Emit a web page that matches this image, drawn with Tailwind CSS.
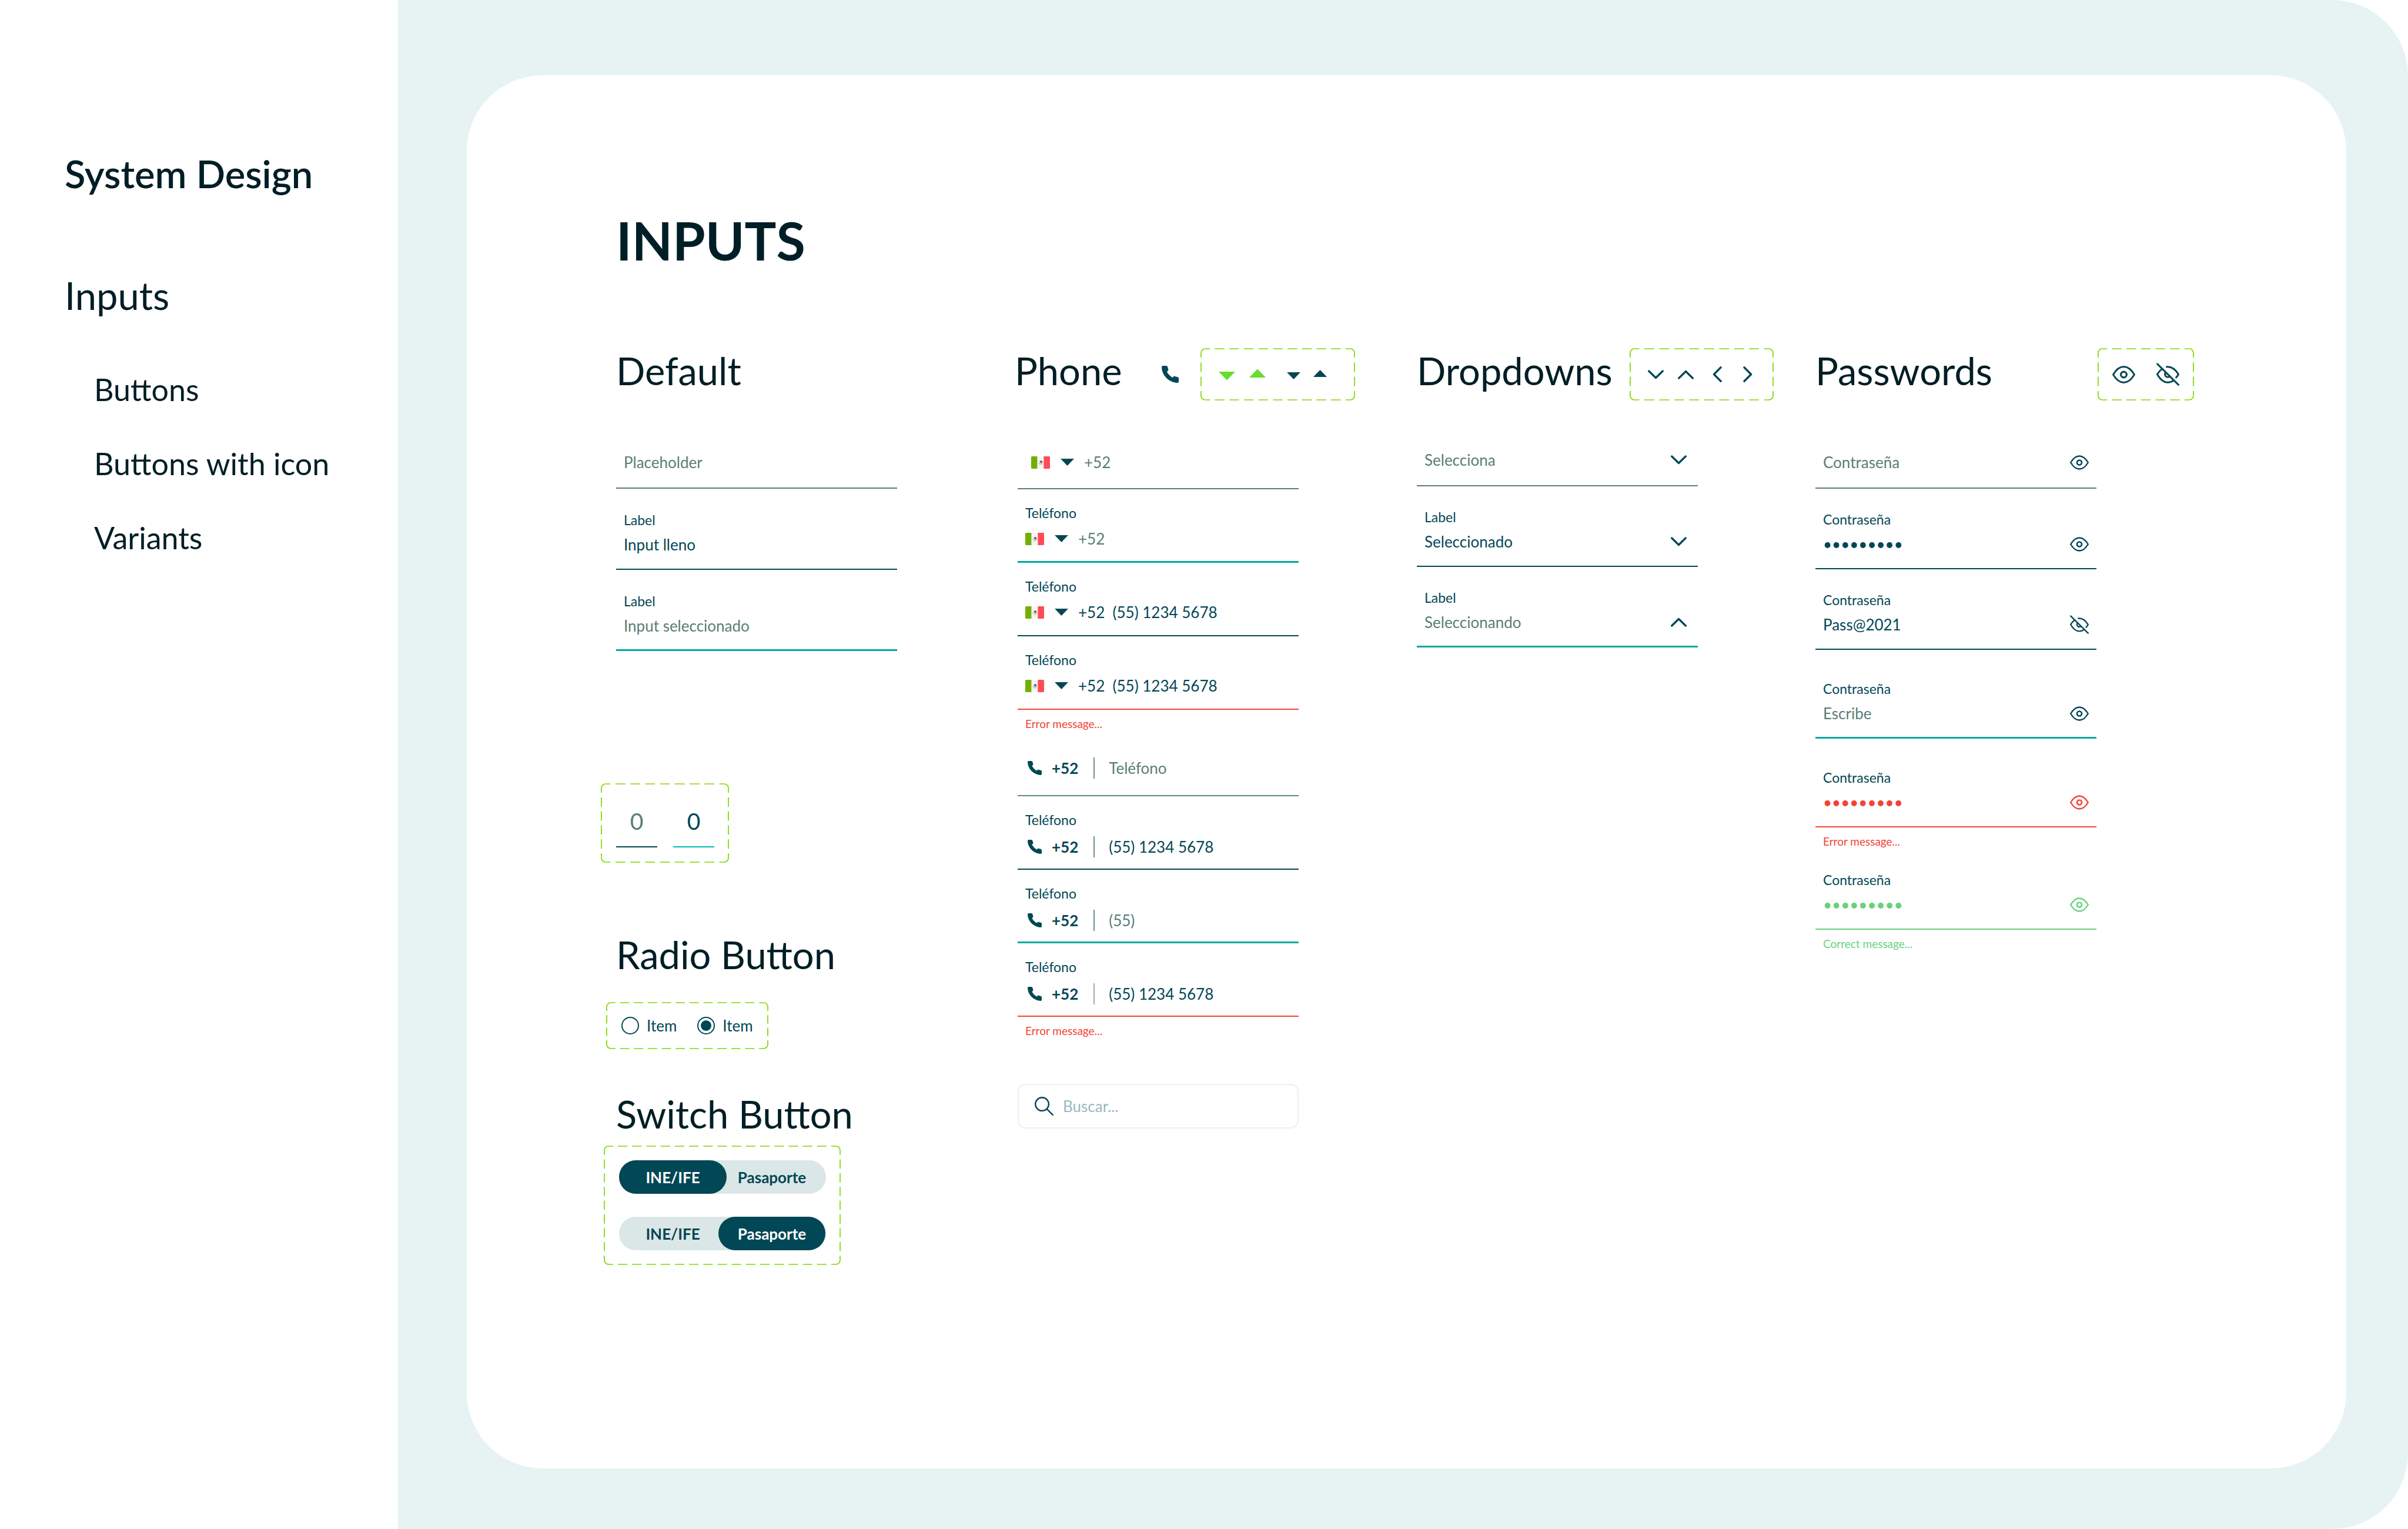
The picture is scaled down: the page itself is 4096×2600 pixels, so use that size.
<!DOCTYPE html>
<html lang="es">
<head>
<meta charset="utf-8">
<meta name="viewport" content="width=device-width, initial-scale=1">
<title>System Design – Inputs</title>
<script src="https://cdn.jsdelivr.net/npm/@tailwindcss/browser@4"></script>
</head>
<body class="min-h-screen flex bg-white font-[Lato,sans-serif] text-[#001e26]">

<!-- Shared icons -->
<svg class="hidden" aria-hidden="true">
  <symbol id="eye" viewBox="0 0 48 37">
    <path d="M1.8 18.5C7.5 9 15 1.9 24 1.9S40.500 9 46.200 18.500C40.500 28 33 35.100 24 35.100S7.500 28 1.800 18.500Z" fill="none" stroke="currentColor" stroke-width="3.6" stroke-linejoin="round"/>
    <circle cx="24" cy="18.5" r="6" fill="none" stroke="currentColor" stroke-width="4"/>
  </symbol>
  <symbol id="eye-off" viewBox="0 0 48 48">
    <g fill="none" stroke="currentColor" stroke-width="3.6" stroke-linecap="round" stroke-linejoin="round">
      <path d="M21.500 8.300C32 7.500 40 13.500 46.200 24C45 26.500 43.300 28.800 41.300 30.800"/>
      <path d="M12 12.500C8 15.500 4.500 19.500 1.800 24C7.500 34 15 41 24 41C28.500 41 32.500 39.500 36 36.800"/>
      <path d="M18.800 20.500C16.500 25.500 19.500 30 24 30C25.500 30 27 29.500 28 28.500"/>
      <path d="M2 2.300L46.200 46"/>
    </g>
  </symbol>
  <symbol id="phone" viewBox="0 0 67 67">
    <path fill="currentColor" d="M5 0H18Q22.500 0 23.500 5L26 14Q27 18 24 20.500L20.500 23.500Q29 38 43 46.500L45.500 43Q47.500 40.500 51 41.500L62 44Q67 45 67 49.500V62Q67 67 62 67C28 65 1 38 0 5Q0 0 5 0Z"/>
  </symbol>
  <symbol id="search" viewBox="0 0 40 40">
    <g fill="none" stroke="currentColor" stroke-width="3" stroke-linecap="round">
      <circle cx="15.700" cy="15.700" r="14.200"/>
      <path d="M26 26.200L38.500 38.500"/>
    </g>
  </symbol>
  <symbol id="chevron" viewBox="0 0 34 20">
    <path d="M2.200 2.400L17 17L31.800 2.400" fill="none" stroke="currentColor" stroke-width="4.200" stroke-linecap="round" stroke-linejoin="round"/>
  </symbol>
  <symbol id="chevron-side" viewBox="0 0 20 34">
    <path d="M17.600 2.200L3 17L17.600 31.800" fill="none" stroke="currentColor" stroke-width="4.200" stroke-linecap="round" stroke-linejoin="round"/>
  </symbol>
  <symbol id="caret" viewBox="0 0 23 12">
    <path d="M0 0H23L11.500 12Z" fill="currentColor"/>
  </symbol>
  <symbol id="flag-mx" viewBox="0 0 40 26">
    <path d="M2 0H13.300V26H2Q0 26 0 24V2Q0 0 2 0Z" fill="#73af00"/>
    <path d="M13.300 0H26.700V26H13.300Z" fill="#f5f5f5"/>
    <path d="M26.700 0H38Q40 0 40 2V24Q40 26 38 26H26.700Z" fill="#ff4b55"/>
    <path d="M15.800 12.500C16 17 19 18 20.500 18S24.500 16.500 24.700 12.500" fill="none" stroke="#b9cf8a" stroke-width="1"/>
    <path d="M18 11C19.500 8.200 23.500 8.500 24 11.500C24 14 21.500 14.500 20 13.500Z" fill="#8c5a5f"/>
    <path d="M20.500 9.500L23 12" stroke="#5d3540" stroke-width="1.200"/>
    <path d="M17.500 14.500H20M21 15.500H23.500" stroke="#3fa9c4" stroke-width="1.400"/>
    <path d="M19.500 16.500H21.500" stroke="#e2c34c" stroke-width="1"/>
  </symbol>
</svg>

<aside class="w-[677px] shrink-0 pl-[110px] pt-[255px]">
  <p class="text-[65px] leading-[80px] font-semibold">System Design</p>
  <nav class="mt-[127px]">
    <a href="#inputs" class="block text-[65px] leading-[80px]">Inputs</a>
    <ul class="mt-[88px] pl-[50px] flex flex-col gap-[62px] text-[52px] leading-[64px]">
      <li><a href="#buttons">Buttons</a></li>
      <li><a href="#buttons-icon">Buttons with icon</a></li>
      <li><a href="#variants">Variants</a></li>
    </ul>
  </nav>
</aside>

<main id="inputs" class="flex-1 flex rounded-r-[129px] bg-[#e7f3f3] pl-[117px] pr-[105px] pt-[128px] pb-[103px]">
  <div class="flex-1 rounded-[129px] bg-white pt-[226px] pl-[254px] pr-[259px]">
    <h1 class="text-[90px] leading-[108px] font-bold">INPUTS</h1>

    <div class="mt-[130px] grid grid-cols-[678fr_684fr_678fr_644fr] text-[26px] leading-8 text-[#024755]">

      <!-- Default -->
      <section>
        <div class="min-h-[89px]">
          <h2 class="text-[65px] leading-[76px] text-[#001e26]">Default</h2>
        </div>
        <div class="mt-[89px] w-[478px] flex flex-col gap-[39px]">
          <div class="px-[13px] pb-[27px] border-b-2 border-[#5a7d76]">
            <input aria-label="Placeholder" placeholder="Placeholder" class="block w-full h-8 outline-none placeholder:text-[#5a7d76]">
          </div>
          <div class="px-[13px] pb-[25px] border-b-2 border-[#024755]">
            <label for="d2" class="block text-[23px] leading-7">Label</label>
            <input id="d2" value="Input lleno" class="block mt-3 w-full h-8 outline-none">
          </div>
          <div class="px-[13px] pb-6 border-b-3 border-[#00a99d]">
            <label for="d3" class="block text-[23px] leading-7">Label</label>
            <input id="d3" placeholder="Input seleccionado" class="block mt-3 w-full h-8 outline-none placeholder:text-[#5a7d76]">
          </div>
        </div>

        <div class="relative -ml-[26px] mt-[225px] w-[218px] h-[135px] px-[26px] pt-10 flex items-start gap-[27px]">
          <svg class="absolute inset-0 size-full" viewBox="0 0 218 135" fill="none" stroke="#80d700" stroke-width="1.700" aria-hidden="true">
            <path d="M1 8a7 7 0 0 1 7-7M210 1a7 7 0 0 1 7 7M217 127a7 7 0 0 1-7 7M8 134a7 7 0 0 1-7-7"/>
            <g stroke-dasharray="2 1" stroke-dashoffset="1">
              <path pathLength="24" d="M8 1H210"/><path pathLength="24" d="M8 134H210"/>
              <path pathLength="15" d="M1 8V127"/><path pathLength="15" d="M217 8V127"/>
            </g>
          </svg>
          <input aria-label="Dígito 1" placeholder="0" class="relative w-[70px] h-[69px] pb-[19px] border-b-2 border-[#024755] text-center text-[39px] leading-[48px] outline-none placeholder:text-[#5a7d76]">
          <input aria-label="Dígito 2" value="0" class="relative w-[70px] h-[69px] pb-[19px] border-b-2 border-[#00bdb2] text-center text-[39px] leading-[48px] outline-none">
        </div>

        <h2 class="mt-[118px] text-[65px] leading-[76px] text-[#001e26]">Radio Button</h2>
        <div class="relative -ml-[17px] mt-[43px] w-[276px] h-[80px] pl-[26px] flex items-center gap-[35px]">
          <svg class="absolute inset-0 size-full" viewBox="0 0 276 80" fill="none" stroke="#80d700" stroke-width="1.700" aria-hidden="true">
            <path d="M1 8a7 7 0 0 1 7-7M268 1a7 7 0 0 1 7 7M275 72a7 7 0 0 1-7 7M8 79a7 7 0 0 1-7-7"/>
            <g stroke-dasharray="2 1" stroke-dashoffset="1">
              <path pathLength="33" d="M8 1H268"/><path pathLength="33" d="M8 79H268"/>
              <path pathLength="9" d="M1 8V72"/><path pathLength="9" d="M275 8V72"/>
            </g>
          </svg>
          <label class="relative flex items-center gap-[13px]"><input type="radio" name="item" class="appearance-none grid place-content-center size-[30px] rounded-full border-2 border-[#024755] before:size-[18px] before:rounded-full checked:before:bg-[#024755]">Item</label>
          <label class="relative flex items-center gap-[13px]"><input type="radio" name="item" checked class="appearance-none grid place-content-center size-[30px] rounded-full border-2 border-[#024755] before:size-[18px] before:rounded-full checked:before:bg-[#024755]">Item</label>
        </div>

        <h2 class="mt-[72px] text-[65px] leading-[76px] text-[#001e26]">Switch Button</h2>
        <div class="relative -ml-[21px] mt-4 w-[403px] h-[203px] px-[26px] py-[25px] flex flex-col gap-[39px] font-bold">
          <svg class="absolute inset-0 size-full" viewBox="0 0 403 203" fill="none" stroke="#80d700" stroke-width="1.700" aria-hidden="true">
            <path d="M1 8a7 7 0 0 1 7-7M395 1a7 7 0 0 1 7 7M402 195a7 7 0 0 1-7 7M8 202a7 7 0 0 1-7-7"/>
            <g stroke-dasharray="2 1" stroke-dashoffset="1">
              <path pathLength="48" d="M8 1H395"/><path pathLength="48" d="M8 202H395"/>
              <path pathLength="24" d="M1 8V195"/><path pathLength="24" d="M402 8V195"/>
            </g>
          </svg>
          <div class="relative flex w-[352px] h-[57px] rounded-full bg-[#dbe7e6]">
            <button type="button" aria-pressed="true" class="w-[183px] rounded-full bg-[#024755] text-white">INE/IFE</button>
            <button type="button" aria-pressed="false" class="-ml-[14px] w-[182px] rounded-full">Pasaporte</button>
          </div>
          <div class="relative flex w-[352px] h-[57px] rounded-full bg-[#dbe7e6]">
            <button type="button" aria-pressed="false" class="w-[183px] rounded-full">INE/IFE</button>
            <button type="button" aria-pressed="true" class="-ml-[14px] w-[182px] rounded-full bg-[#024755] text-white">Pasaporte</button>
          </div>
        </div>
      </section>

      <!-- Phone -->
      <section>
        <div class="min-h-[89px] w-[579px] flex items-start justify-between">
          <h2 class="text-[65px] leading-[76px] text-[#001e26]">Phone</h2>
          <div class="flex items-center gap-[37px]">
            <svg class="size-[29px]" aria-hidden="true"><use href="#phone"/></svg>
            <div class="relative w-[263px] h-[89px] pl-[31px] flex items-center">
              <svg class="absolute inset-0 size-full" viewBox="0 0 263 89" fill="none" stroke="#80d700" stroke-width="1.700" aria-hidden="true">
                <path d="M1 8a7 7 0 0 1 7-7M255 1a7 7 0 0 1 7 7M262 81a7 7 0 0 1-7 7M8 88a7 7 0 0 1-7-7"/>
                <g stroke-dasharray="2 1" stroke-dashoffset="1">
                  <path pathLength="30" d="M8 1H255"/><path pathLength="30" d="M8 88H255"/>
                  <path pathLength="9" d="M1 8V81"/><path pathLength="9" d="M262 8V81"/>
                </g>
              </svg>
              <div class="flex gap-6 text-[#66dd2e]">
                <svg class="w-7 h-5" viewBox="0 0 28 20" aria-hidden="true"><path d="M0 5H28L14 19.500Z" fill="currentColor"/></svg>
                <svg class="w-7 h-5" viewBox="0 0 28 20" aria-hidden="true"><path d="M0 15H28L14 .5Z" fill="currentColor"/></svg>
              </div>
              <div class="ml-9 flex gap-[22px]">
                <svg class="w-[23px] h-5" viewBox="0 0 23 20" aria-hidden="true"><path d="M0 6H23L11.500 18Z" fill="currentColor"/></svg>
                <svg class="w-[23px] h-5" viewBox="0 0 23 20" aria-hidden="true"><path d="M0 14H23L11.500 2Z" fill="currentColor"/></svg>
              </div>
            </div>
          </div>
        </div>

        <div class="mt-[89px] ml-[5px] w-[478px]">
          <div class="flex flex-col gap-[26px]">
            <div class="pl-[23px] pr-3 pb-7 border-b-2 border-[#5a7d76]">
              <div class="flex items-center h-8">
                <button type="button" aria-label="País" class="flex items-center gap-[18px]">
                  <svg class="w-8 h-[21px]" aria-hidden="true"><use href="#flag-mx"/></svg>
                  <svg class="w-[23px] h-3" aria-hidden="true"><use href="#caret"/></svg>
                </button>
                <input type="tel" aria-label="Teléfono" placeholder="+52" class="ml-[17px] flex-1 min-w-0 h-8 outline-none placeholder:text-[#5a7d76]">
              </div>
            </div>
            <div class="px-[13px] pb-[22px] border-b-3 border-[#00a99d]">
              <label for="p2" class="block text-[23px] leading-7">Teléfono</label>
              <div class="mt-[14px] flex items-center h-8">
                <button type="button" aria-label="País" class="flex items-center gap-[18px]">
                  <svg class="w-8 h-[21px]" aria-hidden="true"><use href="#flag-mx"/></svg>
                  <svg class="w-[23px] h-3" aria-hidden="true"><use href="#caret"/></svg>
                </button>
                <input id="p2" type="tel" placeholder="+52" class="ml-[17px] flex-1 min-w-0 h-8 outline-none placeholder:text-[#5a7d76]">
              </div>
            </div>
            <div class="px-[13px] pb-[23px] border-b-2 border-[#024755]">
              <label for="p3" class="block text-[23px] leading-7">Teléfono</label>
              <div class="mt-[14px] flex items-center h-8">
                <button type="button" aria-label="País" class="flex items-center gap-[18px]">
                  <svg class="w-8 h-[21px]" aria-hidden="true"><use href="#flag-mx"/></svg>
                  <svg class="w-[23px] h-3" aria-hidden="true"><use href="#caret"/></svg>
                </button>
                <input id="p3" type="tel" value="+52  (55) 1234 5678" class="ml-[17px] flex-1 min-w-0 h-8 outline-none">
              </div>
            </div>
            <div class="px-[13px] pb-[23px] border-b-2 border-[#f44336]">
              <label for="p4" class="block text-[23px] leading-7">Teléfono</label>
              <div class="mt-[14px] flex items-center h-8">
                <button type="button" aria-label="País" class="flex items-center gap-[18px]">
                  <svg class="w-8 h-[21px]" aria-hidden="true"><use href="#flag-mx"/></svg>
                  <svg class="w-[23px] h-3" aria-hidden="true"><use href="#caret"/></svg>
                </button>
                <input id="p4" type="tel" value="+52  (55) 1234 5678" class="ml-[17px] flex-1 min-w-0 h-8 outline-none">
              </div>
            </div>
          </div>
          <p class="mt-3 px-[13px] text-[19px] leading-6 text-[#f44336]">Error message...</p>

          <div class="mt-[47px] flex flex-col gap-[26px]">
            <div class="px-[17px] pb-[30px] border-b-2 border-[#5a8d7c]">
              <div class="flex items-center h-8">
                <svg class="size-6" aria-hidden="true"><use href="#phone"/></svg>
                <span class="ml-[17px] font-bold">+52</span>
                <span class="ml-[26px] w-[2px] h-9 bg-[#6b8f99]"></span>
                <input type="tel" aria-label="Teléfono" placeholder="Teléfono" class="ml-6 flex-1 min-w-0 h-8 outline-none placeholder:text-[#5a7d76]">
              </div>
            </div>
            <div class="pb-[21px] border-b-2 border-[#024755]">
              <label for="p6" class="block px-[13px] text-[23px] leading-7">Teléfono</label>
              <div class="mt-4 px-[17px] flex items-center h-8">
                <svg class="size-6" aria-hidden="true"><use href="#phone"/></svg>
                <span class="ml-[17px] font-bold">+52</span>
                <span class="ml-[26px] w-[2px] h-9 bg-[#6b8f99]"></span>
                <input id="p6" type="tel" value="(55) 1234 5678" class="ml-6 flex-1 min-w-0 h-8 outline-none">
              </div>
            </div>
            <div class="pb-5 border-b-3 border-[#00a99d]">
              <label for="p7" class="block px-[13px] text-[23px] leading-7">Teléfono</label>
              <div class="mt-4 px-[17px] flex items-center h-8">
                <svg class="size-6" aria-hidden="true"><use href="#phone"/></svg>
                <span class="ml-[17px] font-bold">+52</span>
                <span class="ml-[26px] w-[2px] h-9 bg-[#6b8f99]"></span>
                <input id="p7" type="tel" placeholder="(55)" class="ml-6 flex-1 min-w-0 h-8 outline-none placeholder:text-[#5a7d76]">
              </div>
            </div>
            <div class="pb-[21px] border-b-2 border-[#f44336]">
              <label for="p8" class="block px-[13px] text-[23px] leading-7">Teléfono</label>
              <div class="mt-4 px-[17px] flex items-center h-8">
                <svg class="size-6" aria-hidden="true"><use href="#phone"/></svg>
                <span class="ml-[17px] font-bold">+52</span>
                <span class="ml-[26px] w-[2px] h-9 bg-[#9bb0ab]"></span>
                <input id="p8" type="tel" value="(55) 1234 5678" class="ml-6 flex-1 min-w-0 h-8 outline-none">
              </div>
            </div>
          </div>
          <p class="mt-3 px-[13px] text-[19px] leading-6 text-[#f44336]">Error message...</p>

          <div class="mt-[78px] h-[76px] pl-[27px] pr-3 flex items-center border-2 border-[#efefef] rounded-[14px]">
            <svg class="size-8" aria-hidden="true"><use href="#search"/></svg>
            <input type="search" aria-label="Buscar" placeholder="Buscar..." class="ml-4 flex-1 min-w-0 h-8 outline-none placeholder:text-[#9bb8bf]">
          </div>
        </div>
      </section>

      <!-- Dropdowns -->
      <section>
        <div class="min-h-[89px] w-[607px] flex items-start justify-between">
          <h2 class="text-[65px] leading-[76px] text-[#001e26]">Dropdowns</h2>
          <div class="relative w-[245px] h-[89px] pl-[31px] flex items-center">
            <svg class="absolute inset-0 size-full" viewBox="0 0 245 89" fill="none" stroke="#80d700" stroke-width="1.700" aria-hidden="true">
              <path d="M1 8a7 7 0 0 1 7-7M237 1a7 7 0 0 1 7 7M244 81a7 7 0 0 1-7 7M8 88a7 7 0 0 1-7-7"/>
              <g stroke-dasharray="2 1" stroke-dashoffset="1">
                <path pathLength="27" d="M8 1H237"/><path pathLength="27" d="M8 88H237"/>
                <path pathLength="9" d="M1 8V81"/><path pathLength="9" d="M244 8V81"/>
              </g>
            </svg>
            <svg class="w-[27px] h-4" aria-hidden="true"><use href="#chevron"/></svg>
            <svg class="ml-6 w-[27px] h-4 rotate-180" aria-hidden="true"><use href="#chevron"/></svg>
            <svg class="ml-8 w-4 h-[27px]" aria-hidden="true"><use href="#chevron-side"/></svg>
            <svg class="ml-9 w-4 h-[27px] rotate-180" aria-hidden="true"><use href="#chevron-side"/></svg>
          </div>
        </div>
        <div class="mt-[85px] w-[478px] flex flex-col gap-[38px]">
          <div class="pl-[13px] pr-[19px] pb-[27px] flex items-center border-b-2 border-[#5a7d76]">
            <select aria-label="Selecciona" class="appearance-none flex-1 min-w-0 h-8 outline-none text-[#5a7d76]"><option>Selecciona</option></select>
            <svg class="w-[27px] h-4 pointer-events-none" aria-hidden="true"><use href="#chevron"/></svg>
          </div>
          <div class="pl-[13px] pr-[19px] pb-[25px] border-b-2 border-[#024755]">
            <label for="s2" class="block text-[23px] leading-7">Label</label>
            <div class="mt-3 flex items-center">
              <select id="s2" class="appearance-none flex-1 min-w-0 h-8 outline-none"><option>Seleccionado</option></select>
              <svg class="w-[27px] h-4 pointer-events-none" aria-hidden="true"><use href="#chevron"/></svg>
            </div>
          </div>
          <div class="pl-[13px] pr-[19px] pb-6 border-b-3 border-[#00a99d]">
            <label for="s3" class="block text-[23px] leading-7">Label</label>
            <div class="mt-3 flex items-center">
              <select id="s3" class="appearance-none flex-1 min-w-0 h-8 outline-none text-[#5a7d76]"><option>Seleccionando</option></select>
              <svg class="w-[27px] h-4 rotate-180 pointer-events-none" aria-hidden="true"><use href="#chevron"/></svg>
            </div>
          </div>
        </div>
      </section>

      <!-- Passwords -->
      <section>
        <div class="min-h-[89px] flex items-start justify-between">
          <h2 class="text-[65px] leading-[76px] text-[#001e26]">Passwords</h2>
          <div class="relative w-[164px] h-[89px] px-[25px] flex items-center justify-between">
            <svg class="absolute inset-0 size-full" viewBox="0 0 164 89" fill="none" stroke="#80d700" stroke-width="1.700" aria-hidden="true">
              <path d="M1 8a7 7 0 0 1 7-7M156 1a7 7 0 0 1 7 7M163 81a7 7 0 0 1-7 7M8 88a7 7 0 0 1-7-7"/>
              <g stroke-dasharray="2 1" stroke-dashoffset="1">
                <path pathLength="18" d="M8 1H156"/><path pathLength="18" d="M8 88H156"/>
                <path pathLength="9" d="M1 8V81"/><path pathLength="9" d="M163 8V81"/>
              </g>
            </svg>
            <svg class="w-[39px] h-[30px]" aria-hidden="true"><use href="#eye"/></svg>
            <svg class="size-[39px]" aria-hidden="true"><use href="#eye-off"/></svg>
          </div>
        </div>
        <div class="mt-[89px] w-[478px] flex flex-col gap-[52px]">
          <div class="flex flex-col gap-[38px]">
            <div class="px-[13px] pb-[27px] flex items-center border-b-2 border-[#5a7d76]">
              <input type="password" aria-label="Contraseña" placeholder="Contraseña" class="flex-1 min-w-0 h-8 outline-none placeholder:text-[#5a7d76]">
              <button type="button" aria-label="Mostrar"><svg class="w-8 h-[25px]" aria-hidden="true"><use href="#eye"/></svg></button>
            </div>
            <div class="px-[13px] pb-[25px] border-b-2 border-[#024755]">
              <label for="w2" class="block text-[23px] leading-7">Contraseña</label>
              <div class="mt-3 h-8 flex items-center">
                <input id="w2" type="password" value="Pass@2021" class="flex-1 min-w-0 h-8 outline-none">
                <button type="button" aria-label="Mostrar"><svg class="w-8 h-[25px]" aria-hidden="true"><use href="#eye"/></svg></button>
              </div>
            </div>
            <div class="px-[13px] pb-[25px] border-b-2 border-[#024755]">
              <label for="w3" class="block text-[23px] leading-7">Contraseña</label>
              <div class="mt-3 h-8 flex items-center">
                <input id="w3" type="text" value="Pass@2021" class="flex-1 min-w-0 h-8 outline-none">
                <button type="button" aria-label="Ocultar"><svg class="size-8" aria-hidden="true"><use href="#eye-off"/></svg></button>
              </div>
            </div>
          </div>
          <div class="px-[13px] pb-6 border-b-3 border-[#00a99d]">
            <label for="w4" class="block text-[23px] leading-7">Contraseña</label>
            <div class="mt-3 h-8 flex items-center">
              <input id="w4" type="password" placeholder="Escribe" class="flex-1 min-w-0 h-8 outline-none placeholder:text-[#5a7d76]">
              <button type="button" aria-label="Mostrar"><svg class="w-8 h-[25px]" aria-hidden="true"><use href="#eye"/></svg></button>
            </div>
          </div>
          <div class="flex flex-col gap-[39px]">
            <div>
              <div class="px-[13px] pb-[25px] border-b-2 border-[#f44336]">
                <label for="w5" class="block text-[23px] leading-7">Contraseña</label>
                <div class="mt-3 h-8 flex items-center text-[#f44336]">
                  <input id="w5" type="password" value="Pass@2021" class="flex-1 min-w-0 h-8 outline-none">
                  <button type="button" aria-label="Mostrar"><svg class="w-8 h-[25px]" aria-hidden="true"><use href="#eye"/></svg></button>
                </div>
              </div>
              <p class="mt-3 px-[13px] text-[19px] leading-6 text-[#f44336]">Error message...</p>
            </div>
            <div>
              <div class="px-[13px] pb-[25px] border-b-2 border-[#68d17a]">
                <label for="w6" class="block text-[23px] leading-7">Contraseña</label>
                <div class="mt-3 h-8 flex items-center text-[#68d17a]">
                  <input id="w6" type="password" value="Pass@2021" class="flex-1 min-w-0 h-8 outline-none">
                  <button type="button" aria-label="Mostrar"><svg class="w-8 h-[25px]" aria-hidden="true"><use href="#eye"/></svg></button>
                </div>
              </div>
              <p class="mt-3 px-[13px] text-[19px] leading-6 text-[#68d17a]">Correct message...</p>
            </div>
          </div>
        </div>
      </section>
    </div>
  </div>
</main>
</body>
</html>
